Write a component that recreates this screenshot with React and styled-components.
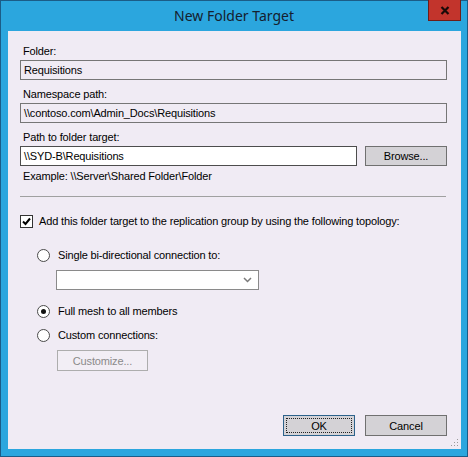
import React from 'react'
import styled, { createGlobalStyle } from 'styled-components'

const GlobalStyle = createGlobalStyle`
  html, body { margin: 0; padding: 0; background: #2ba6de; }
  body { font-family: "Liberation Sans", Arial, sans-serif; font-size: 11px; color: #000; letter-spacing: -0.15px; }
`

const Window = styled.div`
  width: 468px;
  height: 457px;
  box-sizing: border-box;
  border: 1px solid #1b5c87;
  background: #2ba6de;
  display: flex;
  flex-direction: column;
`

const TitleBar = styled.div`
  height: 30px;
  display: grid;
  grid-template-columns: 1fr auto 1fr;
  align-items: start;
`

const Title = styled.div`
  grid-column: 2;
  font-family: "Noto Sans", "Open Sans", sans-serif;
  font-size: 14px;
  letter-spacing: 0;
  line-height: 30px;
  color: #15202e;
`

const CloseButton = styled.div`
  grid-column: 3;
  justify-self: end;
  margin: -1px 6px 0 0;
  width: 33px;
  height: 21px;
  box-sizing: border-box;
  background: #c2342c;
  border: 1px solid #6d1d18;
  border-top: none;
  display: flex;
  align-items: center;
  justify-content: center;
`

const Client = styled.div`
  flex: 1;
  margin: 0 6px 7px 7px;
  background: #f0ebf4;
  padding: 13px 14px 13px 12px;
  display: flex;
  flex-direction: column;
  position: relative;
`

const Label = styled.div`
  line-height: 14px;
  padding-left: 3px;
  margin-top: ${p => p.$top || 0}px;
  margin-bottom: ${p => p.$bottom || 0}px;
`

const Field = styled.div`
  height: 20px;
  box-sizing: border-box;
  border: 1px solid ${p => (p.$editable ? '#4d4d4d' : '#767676')};
  background: ${p => (p.$editable ? '#ffffff' : 'transparent')};
  padding-left: 3px;
  line-height: 18px;
  white-space: nowrap;
  flex: ${p => (p.$grow ? 1 : 'none')};
`

const Row = styled.div`
  display: flex;
  align-items: center;
  gap: ${p => p.$gap || 0}px;
  margin-top: ${p => p.$top || 0}px;
  margin-left: ${p => p.$indent || 0}px;
`

const Button = styled.div`
  width: ${p => p.$w}px;
  height: ${p => p.$h || 20}px;
  box-sizing: border-box;
  border: 1px solid ${p => (p.$disabled ? '#adadad' : p.$default ? '#2c628b' : '#707070')};
  background: ${p => (p.$disabled ? '#f2eef5' : '#d4d2d6')};
  color: ${p => (p.$disabled ? '#8a8a8a' : '#000')};
  display: flex;
  align-items: center;
  justify-content: center;
  flex: none;
`

const FocusRect = styled.span`
  display: flex;
  align-items: center;
  justify-content: center;
  width: calc(100% - 4px);
  height: calc(100% - 4px);
  outline: 1px dotted #222;
  outline-offset: -1px;
`

const Separator = styled.div`
  height: 1px;
  background: #a0a0a0;
  margin: 13px 1px 0 0;
`

const CheckBox = styled.div`
  width: 13px;
  height: 13px;
  box-sizing: border-box;
  border: 1px solid #333;
  background: #fff;
  display: flex;
  align-items: center;
  justify-content: center;
`

const Radio = styled.div`
  width: 13px;
  height: 13px;
  box-sizing: border-box;
  border-radius: 50%;
  border: 1px solid #4a4a4a;
  background: #fff;
  display: flex;
  align-items: center;
  justify-content: center;
  &::after {
    content: '';
    width: 5px;
    height: 5px;
    border-radius: 50%;
    background: ${p => (p.$checked ? '#111' : 'transparent')};
  }
`

const OptionText = styled.span`
  line-height: 14px;
`

const Combo = styled.div`
  width: 203px;
  height: 20px;
  box-sizing: border-box;
  border: 1px solid #8a8a8a;
  background: #fff;
  display: flex;
  align-items: center;
  justify-content: flex-end;
  padding-right: 6px;
  margin: 8px 0 0 36px;
`

const Footer = styled.div`
  margin-top: auto;
  display: flex;
  justify-content: flex-end;
  gap: 10px;
`

const Grip = styled.svg`
  position: absolute;
  right: 2px;
  bottom: 2px;
`

function Option({ checked, children, top }) {
  return (
    <Row $gap={8} $top={top} $indent={17}>
      <Radio $checked={checked} />
      <OptionText>{children}</OptionText>
    </Row>
  )
}

export default function App() {
  return (
    <>
      <GlobalStyle />
      <Window>
        <TitleBar>
          <Title>New Folder Target</Title>
          <CloseButton>
            <svg width="10" height="9" viewBox="0 0 10 9">
              <path d="M1.5 1 L8.5 8 M8.5 1 L1.5 8" stroke="#1a0a08" strokeWidth="2.2" />
            </svg>
          </CloseButton>
        </TitleBar>
        <Client>
          <Label $bottom={2}>Folder:</Label>
          <Field>Requisitions</Field>
          <Label $top={7} $bottom={2}>Namespace path:</Label>
          <Field>\\contoso.com\Admin_Docs\Requisitions</Field>
          <Label $top={7} $bottom={2}>Path to folder target:</Label>
          <Row $gap={8}>
            <Field $editable $grow>\\SYD-B\Requisitions</Field>
            <Button $w={82}>Browse...</Button>
          </Row>
          <Label $top={3}>Example: \\Server\Shared Folder\Folder</Label>
          <Separator />
          <Row $gap={6} $top={17}>
            <CheckBox>
              <svg width="9" height="9" viewBox="0 0 9 9">
                <path d="M1 4.5 L3.5 7 L8 1.5" stroke="#000" strokeWidth="2" fill="none" />
              </svg>
            </CheckBox>
            <OptionText>Add this folder target to the replication group by using the following topology:</OptionText>
          </Row>
          <Option top={20}>Single bi-directional connection to:</Option>
          <Combo>
            <svg width="9" height="6" viewBox="0 0 9 6">
              <path d="M1 1 L4.5 4.5 L8 1" stroke="#7a7a7a" strokeWidth="1.5" fill="none" />
            </svg>
          </Combo>
          <Option checked top={14}>Full mesh to all members</Option>
          <Option top={10}>Custom connections:</Option>
          <Row $top={8} $indent={37}>
            <Button $w={91} $h={21} $disabled>Customize...</Button>
          </Row>
          <Footer>
            <Button $w={72} $h={21} $default>
              <FocusRect>OK</FocusRect>
            </Button>
            <Button $w={82} $h={21}>Cancel</Button>
          </Footer>
          <Grip width="8" height="8" viewBox="0 0 8 8">
            <rect x="6" y="0" width="1" height="1" fill="#9a9a9a" />
            <rect x="3" y="3" width="1" height="1" fill="#9a9a9a" />
            <rect x="6" y="3" width="1" height="1" fill="#9a9a9a" />
            <rect x="0" y="6" width="1" height="1" fill="#9a9a9a" />
            <rect x="3" y="6" width="1" height="1" fill="#9a9a9a" />
            <rect x="6" y="6" width="1" height="1" fill="#9a9a9a" />
          </Grip>
        </Client>
      </Window>
    </>
  )
}
